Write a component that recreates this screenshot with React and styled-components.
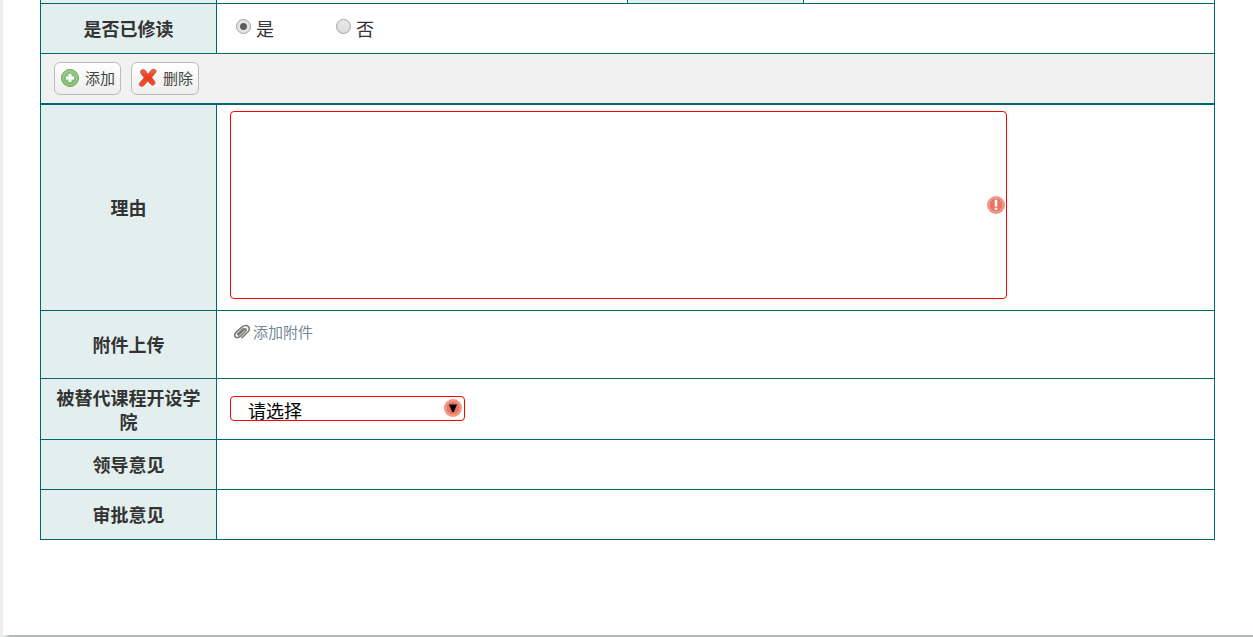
import React, { useState } from "react";
import styled, { createGlobalStyle } from "styled-components";

const GlobalStyle = createGlobalStyle`
  * {
    box-sizing: border-box;
  }

  body {
    margin: 0;
    background: #ebeff0;
    color: #333;
    font-family: "Noto Sans CJK SC", "Microsoft YaHei", sans-serif;
    font-size: 18px;
    line-height: 24px;
  }

  button, select, textarea {
    font-family: inherit;
  }
`;

const Page = styled.main`
  margin: 0 0 2px 3px;
  padding: 0 38px 95px 37px;
  background: #fff;
  box-shadow: 4px 4px 4px #adb3b2;
`;

const FormTable = styled.table`
  width: 100%;
  table-layout: fixed;
  border-collapse: collapse;
`;

const LabelCol = styled.col`
  width: 15%;
`;

const Label = styled.th`
  height: ${(props) => props.$height}px;
  padding: 0 12px;
  border: 1px solid #00686b;
  border-top-width: ${(props) => (props.$cut ? 0 : 1)}px;
  background: #e3efef;
  font-weight: bold;
  text-align: center;
  vertical-align: middle;
`;

const Field = styled.td`
  padding: ${(props) => (props.$top ? "6px 13px" : "0 13px")};
  border: 1px solid #00686b;
  border-top-width: ${(props) => (props.$cut ? 0 : 1)}px;
  vertical-align: ${(props) => (props.$top ? "top" : "middle")};
`;

const ToolbarCell = styled.td`
  height: 50px;
  padding: 0 13px;
  border: 1px solid #00686b;
  background: #f1f1f1;
`;

const Toolbar = styled.div`
  display: flex;
  gap: 10px;
`;

const ToolButton = styled.button`
  display: flex;
  align-items: center;
  gap: 5px;
  height: 33px;
  padding: 0 5px;
  border: 1px solid #bbb;
  border-radius: 6px;
  background: linear-gradient(#fff, #eee);
  color: #444;
  font-size: 15px;
  line-height: 24px;
  cursor: pointer;
`;

const RadioGroup = styled.div`
  display: flex;
  padding-left: 6px;
`;

const RadioLabel = styled.label`
  display: flex;
  align-items: center;
  gap: 5px;
  width: 100px;
`;

const Radio = styled.input`
  appearance: none;
  width: 15px;
  height: 15px;
  margin: 0 0 4px;
  border: 1px solid #a5a5a5;
  border-radius: 50%;
  background: linear-gradient(#e9e9e9, #dcdcdc);

  &:checked {
    background: radial-gradient(circle, #5c5c5c 3px, #e4e4e4 4px);
  }
`;

const ReasonBox = styled.div`
  position: relative;
  width: 80%;
  height: 188px;
`;

const Reason = styled.textarea`
  display: block;
  width: 100%;
  height: 100%;
  padding: 4px 24px 4px 6px;
  border: 1px solid #f00;
  border-radius: 4px;
  outline: none;
  resize: none;
  font-size: 18px;
`;

const ReasonMark = styled.span`
  position: absolute;
  top: 85px;
  right: 2px;
  display: flex;
`;

const AttachButton = styled.button`
  display: flex;
  align-items: center;
  gap: 2px;
  padding: 5px 3px;
  border: 0;
  background: none;
  color: #778899;
  font-size: 15px;
  line-height: 20px;
  cursor: pointer;
`;

const SelectBox = styled.div`
  position: relative;
  width: 235px;
`;

const College = styled.select`
  appearance: none;
  display: block;
  width: 100%;
  height: 25px;
  padding: 2px 24px 0 17px;
  border: 1px solid #f00;
  border-radius: 4px;
  outline: none;
  background: #fff;
  color: #000;
  font-size: 18px;
  line-height: 22px;
`;

const SelectMark = styled.span`
  position: absolute;
  top: 3px;
  right: 3px;
  display: flex;
  pointer-events: none;
`;

function AddIcon() {
  return (
    <svg width="20" height="20" viewBox="0 0 20 20" aria-hidden="true">
      <defs>
        <linearGradient id="addFill" x1="0" y1="0" x2="0" y2="1">
          <stop offset="0" stopColor="#93c883" />
          <stop offset="1" stopColor="#76b765" />
        </linearGradient>
      </defs>
      <circle cx="10" cy="10" r="8.5" fill="url(#addFill)" stroke="#6fab61" />
      <circle cx="10" cy="10" r="7" fill="none" stroke="#a3d094" />
      <path d="M8.5 6h3v2.5H14v3h-2.5V14h-3v-2.5H6v-3h2.5z" fill="#fff" />
    </svg>
  );
}

function DeleteIcon() {
  return (
    <svg width="21" height="20" viewBox="0 0 21 20" aria-hidden="true">
      <defs>
        <linearGradient id="delFill" x1="0" y1="0" x2="0" y2="1">
          <stop offset="0" stopColor="#ee6a50" />
          <stop offset="0.5" stopColor="#ea3b1c" />
          <stop offset="1" stopColor="#fb5428" />
        </linearGradient>
      </defs>
      <path
        d="M4.2 2.2Q6.8.6 8.4 2.6L11 6.3L14.6 1.8Q16.9.4 18.8 2.2Q19.5 3.2 18.7 4.4L14.6 9.4L17.6 13.4Q18.8 15.6 17 16.7Q15.2 17.9 13.7 16.2L10.5 13L7.2 17.3Q5.2 19.3 2.8 17.6Q1.7 16.4 2.6 15L7.2 9.8L4 5.6Q2.6 3.6 4.2 2.2z"
        fill="url(#delFill)"
        stroke="#c94a3b"
        strokeWidth="0.8"
      />
    </svg>
  );
}

function ClipIcon() {
  return (
    <svg width="18" height="18" viewBox="0 0 18 18" aria-hidden="true">
      <path
        d="M5.6 12.3L11.5 6.4Q13.2 5.2 13.2 7Q13.1 8 7.6 13.2Q4.6 15.5 2.6 14.1Q.6 12.1 3 9.4L9.1 3.8Q12.8 1.2 15.5 3.6Q17.4 6 14.8 9L9 14.8M4.6 11.2L10.4 5.6"
        fill="none"
        stroke="#7b7b75"
        strokeWidth="1.6"
        strokeLinecap="round"
      />
    </svg>
  );
}

function RequiredIcon({ arrow }) {
  return (
    <svg width="18" height="18" viewBox="0 0 18 18" aria-hidden="true">
      <circle cx="9" cy="9" r="9" fill="#f09384" />
      <circle cx="9" cy="9" r="7" fill="#ea7463" stroke="#f4a494" />
      {arrow ? (
        <path d="M5 5.5h8L9.8 13H8.2z" fill="#000" />
      ) : (
        <path d="M7.7 3.7h2.6v6.8H7.7zM7.7 11.7h2.6v2.3H7.7z" fill="#fff" />
      )}
    </svg>
  );
}

function App() {
  const [studied, setStudied] = useState("yes");
  const [reason, setReason] = useState("");

  return (
    <>
      <GlobalStyle />
      <Page>
        <FormTable>
          <colgroup>
            <LabelCol />
            <col />
            <LabelCol />
            <col />
          </colgroup>
          <tbody>
            <tr>
              <Label $height={3} $cut />
              <Field $cut />
              <Label $height={3} $cut />
              <Field $cut />
            </tr>
            <tr>
              <Label $height={50}>是否已修读</Label>
              <Field colSpan={3}>
                <RadioGroup>
                  <RadioLabel>
                    <Radio
                      type="radio"
                      name="studied"
                      checked={studied === "yes"}
                      onChange={() => setStudied("yes")}
                    />
                    是
                  </RadioLabel>
                  <RadioLabel>
                    <Radio
                      type="radio"
                      name="studied"
                      checked={studied === "no"}
                      onChange={() => setStudied("no")}
                    />
                    否
                  </RadioLabel>
                </RadioGroup>
              </Field>
            </tr>
            <tr>
              <ToolbarCell colSpan={4}>
                <Toolbar>
                  <ToolButton type="button">
                    <AddIcon />
                    添加
                  </ToolButton>
                  <ToolButton type="button">
                    <DeleteIcon />
                    删除
                  </ToolButton>
                </Toolbar>
              </ToolbarCell>
            </tr>
          </tbody>
        </FormTable>

        <FormTable>
          <colgroup>
            <LabelCol />
            <col />
          </colgroup>
          <tbody>
            <tr>
              <Label $height={206}>
                <label htmlFor="reason">理由</label>
              </Label>
              <Field $top>
                <ReasonBox>
                  <Reason
                    id="reason"
                    value={reason}
                    onChange={(e) => setReason(e.target.value)}
                  />
                  <ReasonMark>
                    <RequiredIcon />
                  </ReasonMark>
                </ReasonBox>
              </Field>
            </tr>
            <tr>
              <Label $height={68}>附件上传</Label>
              <Field $top>
                <AttachButton type="button">
                  <ClipIcon />
                  添加附件
                </AttachButton>
              </Field>
            </tr>
            <tr>
              <Label $height={61}>
                <label htmlFor="college">被替代课程开设学院</label>
              </Label>
              <Field>
                <SelectBox>
                  <College id="college">
                    <option>请选择</option>
                  </College>
                  <SelectMark>
                    <RequiredIcon arrow />
                  </SelectMark>
                </SelectBox>
              </Field>
            </tr>
            <tr>
              <Label $height={50}>领导意见</Label>
              <Field />
            </tr>
            <tr>
              <Label $height={50}>审批意见</Label>
              <Field />
            </tr>
          </tbody>
        </FormTable>
      </Page>
    </>
  );
}

export default App;
